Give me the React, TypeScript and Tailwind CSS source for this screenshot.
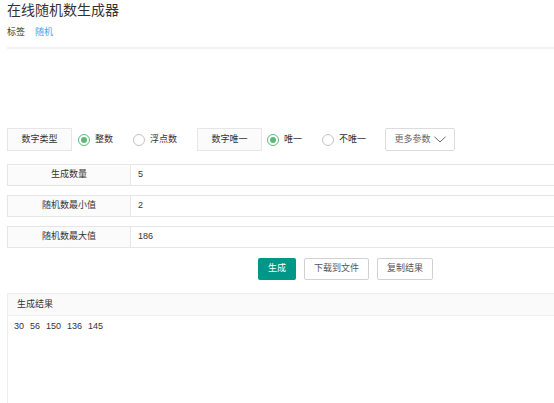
import React from "react";

function Radio({ checked, label, className = "" }: { checked?: boolean; label: string; className?: string }) {
  return (
    <label className={`flex items-center ${className}`}>
      <span
        className={`flex h-[12px] w-[12px] items-center justify-center rounded-full border bg-white ${
          checked ? "border-[#5fb878]" : "border-[#c2c2c2]"
        }`}
      >
        {checked && <span className="h-[6px] w-[6px] rounded-full bg-[#5fb878]" />}
      </span>
      <span className="ml-[5px] text-[9px] text-[#333]">{label}</span>
    </label>
  );
}

const fields = [
  { label: "生成数量", value: "5" },
  { label: "随机数最小值", value: "2" },
  { label: "随机数最大值", value: "186" },
];

const results = ["30", "56", "150", "136", "145"];

export default function App() {
  return (
    <div className="h-screen overflow-hidden bg-white pl-[7px] font-['Liberation_Sans','Noto_Sans_CJK_SC',sans-serif] text-[#333]">
      {/* Header */}
      <h1 className="text-[14px] leading-[20px] font-normal text-[#333]">在线随机数生成器</h1>
      <div className="mt-[7px] flex items-center text-[9px] leading-[10px]">
        <span className="text-[#333]">标签</span>
        <span className="ml-[10px] text-[#3aa6ea]">随机</span>
      </div>
      <div className="mt-[10px] border-t-2 border-[#f2f2f2]" />

      {/* Options */}
      <div className="mt-[79px] flex h-[23px] items-center">
        <div className="flex h-[23px] w-[65px] items-center justify-center border border-[#e6e6e6] bg-[#fbfbfb] text-[9px]">
          数字类型
        </div>
        <Radio checked label="整数" className="ml-[6px]" />
        <Radio label="浮点数" className="ml-[20px]" />
        <div className="ml-[20px] flex h-[23px] w-[65px] items-center justify-center border border-[#e6e6e6] bg-[#fbfbfb] text-[9px]">
          数字唯一
        </div>
        <Radio checked label="唯一" className="ml-[5px]" />
        <Radio label="不唯一" className="ml-[20px]" />
        <button className="ml-[19px] flex h-[23px] w-[70px] items-center justify-center rounded-[2px] border border-[#dcdcdc] bg-white text-[9px] text-[#666]">
          更多参数
          <svg className="ml-[3px] h-[7px] w-[12px]" viewBox="0 0 12 7" fill="none" stroke="#666" strokeWidth="1">
            <polyline points="0.5,0.8 6,6 11.5,0.8" />
          </svg>
        </button>
      </div>

      {/* Fields */}
      <div className="mt-[13px] flex flex-col gap-[9px]">
        {fields.map((f) => (
          <div key={f.label} className="flex h-[22px]">
            <div className="flex w-[124px] items-center justify-center border border-[#e6e6e6] bg-[#fbfbfb] text-[9px]">
              {f.label}
            </div>
            <div className="flex flex-1 items-center border-y border-[#e6e6e6] bg-white pl-[7px] text-[9px]">{f.value}</div>
          </div>
        ))}
      </div>

      {/* Actions */}
      <div className="mt-[10px] ml-[251px] flex h-[22px] gap-[8px]">
        <button className="h-[22px] w-[38px] rounded-[2px] bg-[#009688] text-[9px] text-white">生成</button>
        <button className="h-[22px] w-[65px] rounded-[2px] border border-[#d2d2d2] bg-white text-[9px] text-[#555]">
          下载到文件
        </button>
        <button className="h-[22px] w-[56px] rounded-[2px] border border-[#d2d2d2] bg-white text-[9px] text-[#555]">
          复制结果
        </button>
      </div>

      {/* Result */}
      <div className="mt-[13px] h-[111px] border-l border-t border-[#eee]">
        <div className="flex h-[22px] items-center border-b border-[#eee] bg-[#fafafa] pl-[9px] text-[9px]">生成结果</div>
        <div className="mt-[4px] flex pl-[6px] text-[9px] leading-[12px] text-[#333]">
          {results.map((n) => (
            <span key={n} className="mr-[6px]">
              {n}
            </span>
          ))}
        </div>
      </div>
    </div>
  );
}
